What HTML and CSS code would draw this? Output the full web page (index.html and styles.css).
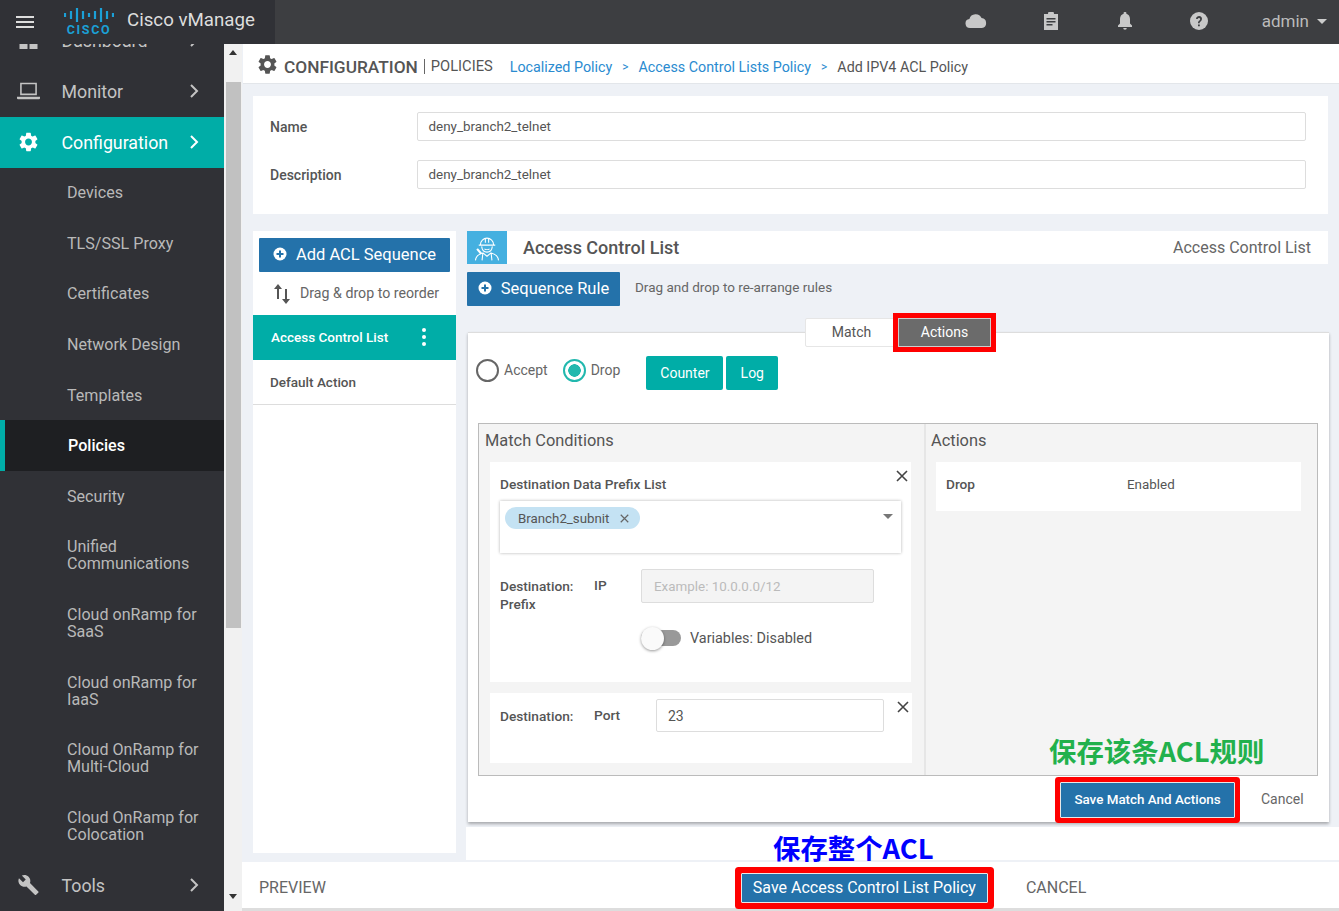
FILE: index.html
```html
<!DOCTYPE html>
<html lang="en">
<head>
  <meta charset="UTF-8">
  <title>Cisco vManage</title>
  <link rel="stylesheet" href="styles.css">
</head>

<body>

  <svg class="defs" width="0" height="0">
    <symbol id="i-gear" viewBox="0 0 24 24"><path d="M19.14 12.94c.04-.3.06-.61.06-.94 0-.32-.02-.64-.07-.94l2.03-1.58a.49.49 0 0 0 .12-.61l-1.92-3.32a.488.488 0 0 0-.59-.22l-2.39.96c-.5-.38-1.03-.7-1.62-.94l-.36-2.54a.484.484 0 0 0-.48-.41h-3.84c-.24 0-.43.17-.47.41l-.36 2.54c-.59.24-1.13.57-1.62.94l-2.39-.96c-.22-.08-.47 0-.59.22L2.74 8.87c-.12.21-.08.47.12.61l2.03 1.58c-.05.3-.09.63-.09.94s.02.64.07.94l-2.03 1.58a.49.49 0 0 0-.12.61l1.92 3.32c.12.22.37.29.59.22l2.39-.96c.5.38 1.03.7 1.62.94l.36 2.54c.05.24.24.41.48.41h3.84c.24 0 .44-.17.47-.41l.36-2.54c.59-.24 1.13-.56 1.62-.94l2.39.96c.22.08.47 0 .59-.22l1.92-3.32c.12-.22.07-.47-.12-.61l-2.01-1.58zM12 15.6c-1.98 0-3.6-1.62-3.6-3.6s1.62-3.6 3.6-3.6 3.6 1.62 3.6 3.6-1.62 3.6-3.6 3.6z"/></symbol>
    <symbol id="i-chev" viewBox="0 0 10 16"><path d="M2 2l6 6-6 6" fill="none" stroke="currentColor" stroke-width="2"/></symbol>
    <symbol id="i-plus" viewBox="0 0 14 14"><circle cx="7" cy="7" r="6.500"/><path d="M6 3.500h2V6h2.500v2H8v2.500H6V8H3.500V6H6z" fill="var(--hole)"/></symbol>
    <symbol id="i-x" viewBox="0 0 12 12"><path d="M1 1l10 10M11 1L1 11" fill="none" stroke="currentColor" stroke-width="1.600"/></symbol>
  </svg>

  <header class="topbar">
    <div class="brand">
      <svg class="burger" viewBox="0 0 18 14"><path d="M0 1h18v2H0zM0 6h18v2H0zM0 11h18v2H0z"/></svg>
      <div class="logo">
        <svg class="logo-bars" viewBox="0 0 50 14">
          <path d="M1 5v4M7 3v8M13 0v14M19 3v8M25 5v4M31 3v8M37 0v14M43 3v8M49 5v4" stroke="#1ba0d7" stroke-width="2.200"/>
        </svg>
        <span class="logo-word">CISCO</span>
      </div>
      <span class="brand-name">Cisco vManage</span>
    </div>
    <div class="top-icons">
      <svg class="ti ti-cloud" viewBox="0 0 22 14"><path d="M5 14a4.500 4.500 0 0 1-.6-8.960A6.500 6.500 0 0 1 16.600 4.100 5 5 0 0 1 17 14z"/></svg>
      <svg class="ti ti-clip" viewBox="0 0 16 18"><path fill-rule="evenodd" d="M1 2h4a3 3 0 0 1 6 0h4v16H1zM3.500 6v1.500h9V6zM3.500 9v1.500h9V9zM3.500 12v1.500h6V12z"/></svg>
      <svg class="ti ti-bell" viewBox="0 0 14 18"><path d="M7 0a1.300 1.300 0 0 1 1.300 1.700C10.600 2.300 12 4.300 12 7v4.500l2 2V15H0v-1.500l2-2V7c0-2.700 1.400-4.700 3.700-5.300A1.300 1.300 0 0 1 7 0zM5.200 16h3.600a1.800 1.800 0 0 1-3.600 0z"/></svg>
      <svg class="ti ti-help" viewBox="0 0 18 18"><circle cx="9" cy="9" r="9"/><path d="M6 7a3 3 0 1 1 4.600 2.500c-.9.600-.9.900-.9 1.800H8c0-1.500.3-2.100 1.400-2.900.6-.4.800-.8.800-1.300a1.300 1.300 0 0 0-2.500-.1zM8 12.500h1.800v1.800H8z" fill="#3d3e41"/></svg>
      <span class="user">admin</span>
      <span class="user-caret"></span>
    </div>
  </header>

  <div class="shell">
    <aside class="sidebar">
      <a class="nav-item nav-cut">
        <svg class="nav-ico" viewBox="0 0 20 20"><path d="M1 1h8v8H1zM11 1h8v8h-8zM1 11h8v8H1zM11 11h8v8h-8z"/></svg>
        <span class="nav-text">Dashboard</span>
        <svg class="nav-chev"><use href="#i-chev"/></svg>
      </a>
      <a class="nav-item">
        <svg class="nav-ico" viewBox="0 0 22 18"><path fill-rule="evenodd" d="M3 1h16v12H3zM4.500 2.500v9h13v-9zM0 14.500h22V16a1 1 0 0 1-1 1H1a1 1 0 0 1-1-1z"/></svg>
        <span class="nav-text">Monitor</span>
        <svg class="nav-chev"><use href="#i-chev"/></svg>
      </a>
      <a class="nav-item nav-open">
        <svg class="nav-ico nav-gear"><use href="#i-gear"/></svg>
        <span class="nav-text">Configuration</span>
        <svg class="nav-chev"><use href="#i-chev"/></svg>
      </a>
      <a class="sub-item">Devices</a>
      <a class="sub-item">TLS/SSL Proxy</a>
      <a class="sub-item">Certificates</a>
      <a class="sub-item">Network Design</a>
      <a class="sub-item">Templates</a>
      <a class="sub-item sub-active">Policies</a>
      <a class="sub-item">Security</a>
      <a class="sub-item sub-two">Unified<br>Communications</a>
      <a class="sub-item sub-two">Cloud onRamp for<br>SaaS</a>
      <a class="sub-item sub-two">Cloud onRamp for<br>IaaS</a>
      <a class="sub-item sub-two">Cloud OnRamp for<br>Multi-Cloud</a>
      <a class="sub-item sub-two">Cloud OnRamp for<br>Colocation</a>
      <a class="nav-item">
        <svg class="nav-ico nav-tool" viewBox="0 0 24 24"><path d="M22.700 19l-9.100-9.100c.9-2.300.4-5-1.500-6.900-2-2-5-2.400-7.400-1.300L9 6 6 9 1.600 4.700C.4 7.100.9 10.100 2.900 12.100c1.900 1.900 4.600 2.400 6.900 1.500l9.100 9.100c.4.400 1 .4 1.400 0l2.300-2.300c.5-.4.5-1.100.1-1.400z"/></svg>
        <span class="nav-text">Tools</span>
        <svg class="nav-chev"><use href="#i-chev"/></svg>
      </a>
    </aside>

    <div class="scrollbar">
      <span class="sb-up"></span>
      <span class="sb-thumb"></span>
      <span class="sb-down"></span>
    </div>

    <main class="main">
      <div class="crumbs">
        <svg class="crumb-gear"><use href="#i-gear"/></svg>
        <span class="crumb-title">CONFIGURATION</span>
        <span class="crumb-sub">POLICIES</span>
        <a class="crumb-link crumb-first">Localized Policy</a>
        <span class="crumb-sep">&gt;</span>
        <a class="crumb-link">Access Control Lists Policy</a>
        <span class="crumb-sep">&gt;</span>
        <span class="crumb-now">Add IPV4 ACL Policy</span>
      </div>

      <section class="name-card">
        <div class="name-row">
          <label class="strong">Name</label>
          <div class="field">deny_branch2_telnet</div>
        </div>
        <div class="name-row">
          <label class="strong">Description</label>
          <div class="field">deny_branch2_telnet</div>
        </div>
      </section>

      <div class="builder">
        <div class="seq-panel">
          <button class="btn-blue btn-add">
            <svg class="plus"><use href="#i-plus"/></svg>Add ACL Sequence
          </button>
          <div class="drag-hint">
            <svg class="sort" viewBox="0 0 18 22"><path d="M5 1l4 5H6v10H4V6H1zM13 21l-4-5h3V6h2v10h3z"/></svg>
            Drag &amp; drop to reorder
          </div>
          <div class="seq-item seq-active">
            <span>Access Control List</span>
            <span class="dots"><i></i><i></i><i></i></span>
          </div>
          <div class="seq-item">Default Action</div>
        </div>

        <div class="rule-col">
          <div class="rule-head">
            <span class="rule-icon">
              <svg viewBox="0 0 34 34" fill="none" stroke="#fff" stroke-width="1.300">
                <path d="M9 13a8 8 0 0 1 16 0M7 13.500h20M15 5.500v5M19 5.500v5"/>
                <path d="M10.500 15c.5 4.500 3 7 6.500 7s6-2.500 6.500-7M14 18c1.500 1.200 4.500 1.200 6 0"/>
                <path d="M3 32c.5-5 3-7.500 9-9l5 4 5-4c6 1.500 8.500 4 9 9M12 23l-1 9M22 23l1 9"/>
                <path d="M5 18l5 6" stroke-width="2.600"/>
              </svg>
            </span>
            <span class="rule-title">Access Control List</span>
            <span class="rule-kind">Access Control List</span>
          </div>

          <div class="seq-row">
            <button class="btn-blue btn-seq">
              <svg class="plus"><use href="#i-plus"/></svg>Sequence Rule
            </button>
            <span class="seq-hint">Drag and drop to re-arrange rules</span>
          </div>

          <div class="rule-card">
            <div class="tabs">
              <span class="tab">Match</span>
              <span class="tab tab-on">Actions</span>
            </div>

            <div class="action-row">
              <span class="radio"></span><span class="radio-label">Accept</span>
              <span class="radio radio-on"></span><span class="radio-label">Drop</span>
              <button class="btn-teal btn-counter">Counter</button>
              <button class="btn-teal btn-log">Log</button>
            </div>

            <div class="cond-box">
              <div class="cond-left">
                <h3>Match Conditions</h3>
                <div class="cond-card cond-prefix">
                  <svg class="close"><use href="#i-x"/></svg>
                  <div class="strong">Destination Data Prefix List</div>
                  <div class="multi">
                    <span class="chip">Branch2_subnit <svg class="chip-x"><use href="#i-x"/></svg></span>
                    <span class="multi-caret"></span>
                  </div>
                  <div class="ip-row">
                    <div class="strong ip-label">Destination: <br>Prefix</div>
                    <div class="strong ip-key">IP</div>
                    <div class="field field-off">Example: 10.0.0.0/12</div>
                  </div>
                  <div class="var-row">
                    <span class="switch"><i></i></span>
                    <span>Variables: Disabled</span>
                  </div>
                </div>
                <div class="cond-card cond-port">
                  <svg class="close"><use href="#i-x"/></svg>
                  <div class="strong ip-label">Destination:</div>
                  <div class="strong port-key">Port</div>
                  <div class="field port-field">23</div>
                </div>
              </div>
              <div class="cond-right">
                <h3>Actions</h3>
                <div class="act-card">
                  <span class="strong act-key">Drop</span>
                  <span>Enabled</span>
                </div>
              </div>
              <div class="note note-green">保存该条ACL规则</div>
            </div>

            <div class="card-foot">
              <button class="btn-blue btn-save marked">Save Match And Actions</button>
              <span class="link-cancel">Cancel</span>
            </div>
          </div>

          <div class="note-band">
            <span class="note note-blue">保存整个ACL</span>
          </div>
        </div>
      </div>

      <footer class="page-foot">
        <span class="preview">PREVIEW</span>
        <button class="btn-blue btn-policy marked">Save Access Control List Policy</button>
        <span class="foot-cancel">CANCEL</span>
      </footer>
    </main>
  </div>

</body>
</html>
```

FILE: styles.css
```css
* {
  box-sizing: border-box;
}

html,
body {
  height: 100%;
}

body {
  margin: 0;
  overflow: hidden;
  font-family: Roboto, "Liberation Sans", sans-serif;
  font-size: 14px;
  color: #555;
  background: #eef1f6;
}

.defs {
  position: absolute;
}

button {
  font-family: inherit;
  border: none;
  padding: 0;
  cursor: pointer;
}

/* top bar */
.topbar {
  display: flex;
  justify-content: space-between;
  height: 44px;
  background: #3d3e41;
}

.brand {
  display: flex;
  align-items: center;
  width: 275px;
  padding-left: 16px;
  background: #303136;
}

.burger {
  width: 18px;
  height: 14px;
  fill: #ddd;
}

.logo {
  display: flex;
  flex-direction: column;
  align-items: center;
  width: 50px;
  margin-left: 30px;
}

.logo-bars {
  width: 50px;
  height: 14px;
  margin-bottom: 2px;
}

.logo-word {
  font-size: 12.500px;
  font-weight: 700;
  line-height: 12px;
  letter-spacing: 1.6px;
  color: #1ba0d7;
}

.brand-name {
  margin-left: 13px;
  margin-bottom: 4px;
  font-size: 18.700px;
  color: #ddd;
}

.top-icons {
  display: flex;
  align-items: center;
  padding-bottom: 2px;
}

.ti {
  fill: #c8c8c8;
}

.ti-cloud {
  width: 22px;
  height: 14px;
}

.ti-clip {
  width: 16px;
  height: 18px;
  margin-left: 56px;
}

.ti-bell {
  width: 14px;
  height: 18px;
  margin-left: 59px;
}

.ti-help {
  width: 18px;
  height: 18px;
  margin-left: 58px;
}

.user {
  margin-left: 54px;
  font-size: 17px;
  color: #bbb;
}

.user-caret {
  width: 0;
  height: 0;
  margin: 0 12px 0 8px;
  border-left: 5px solid transparent;
  border-right: 5px solid transparent;
  border-top: 5px solid #ccc;
}

/* shell */
.shell {
  display: flex;
  height: 867px;
}

.sidebar {
  flex: none;
  width: 224px;
  overflow: hidden;
  background: #303136;
  color: #c9c9c9;
}

.nav-item {
  display: flex;
  align-items: center;
  height: 51px;
  padding-left: 17px;
  font-size: 17.800px;
  color: #c4c4c4;
}

.nav-cut {
  margin-top: -29.500px;
}

.nav-open {
  background: #00ada7;
  color: #fff;
}

.nav-ico {
  flex: none;
  width: 23px;
  height: 20px;
  fill: currentColor;
}

.nav-gear {
  height: 24px;
}

.nav-tool {
  height: 22px;
}

.nav-text {
  flex: 1;
  margin-left: 21.500px;
}

.nav-chev {
  flex: none;
  width: 10px;
  height: 16px;
  margin-right: 25px;
  color: currentColor;
}

.sub-item {
  display: flex;
  align-items: center;
  height: 50.600px;
  padding-left: 67px;
  font-size: 16.100px;
  line-height: 17px;
  color: #b9b9b9;
}

.sub-two {
  height: 67.600px;
}

.sub-active {
  background: #1e1f22;
  border-left: 5px solid #00ada7;
  padding-left: 63px;
  font-weight: 500;
  color: #fff;
}

/* page scrollbar */
.scrollbar {
  flex: none;
  display: flex;
  flex-direction: column;
  align-items: center;
  width: 18px;
  background: #f1f1f1;
}

.sb-up,
.sb-down {
  width: 0;
  height: 0;
  border-left: 4px solid transparent;
  border-right: 4px solid transparent;
}

.sb-up {
  margin-top: 6px;
  border-bottom: 5px solid #333;
}

.sb-thumb {
  width: 15px;
  height: 546px;
  margin-top: 27px;
  background: #c1c1c1;
}

.sb-down {
  margin-top: 266px;
  border-top: 5px solid #333;
}

/* main column */
.main {
  flex: 1;
  display: flex;
  flex-direction: column;
  min-width: 0;
}

.crumbs {
  display: flex;
  align-items: center;
  height: 40px;
  margin-left: 1px;
  padding: 5px 0 0 13px;
  background: #fff;
  border-top: 1px solid #fff;
  border-bottom: 1px solid #e3e6ea;
}

.crumb-gear {
  width: 23px;
  height: 23px;
  fill: #555;
  margin-bottom: 5px;
}

.crumb-title {
  margin-left: 5px;
  font-size: 17.300px;
  font-weight: 500;
  color: #555;
}

.crumb-sub {
  margin-left: 6px;
  padding-left: 6px;
  border-left: 1px solid #666;
  font-size: 14.700px;
  line-height: 15px;
  color: #555;
}

.crumb-link {
  font-size: 14.300px;
  color: #2a8bd0;
}

.crumb-first {
  margin-left: 17px;
}

.crumb-sep {
  margin: 0 10px;
  font-size: 12px;
  color: #2a8bd0;
}

.crumb-now {
  font-size: 14.300px;
  color: #555;
}

.strong {
  font-size: 13.700px;
  font-weight: 500;
  color: #555;
}

.name-card {
  display: flex;
  flex-direction: column;
  height: 118px;
  margin: 12px 11px 0;
  padding: 16px 22px 0 17px;
  gap: 19px;
  background: #fff;
}

.name-row {
  display: flex;
  align-items: center;
  height: 29px;
}

.name-row label {
  flex: none;
  width: 147px;
  font-size: 14px;
}

.field {
  display: flex;
  align-items: center;
  flex: 1;
  height: 100%;
  padding-left: 10.500px;
  font-size: 13.400px;
  color: #555;
  background: #fff;
  border: 1px solid #ddd;
  border-radius: 2px;
}

.builder {
  flex: 1;
  display: flex;
  margin-top: 17px;
  min-height: 0;
}

.seq-panel {
  flex: none;
  width: 203px;
  height: 622px;
  margin-left: 11px;
  padding-top: 7px;
  background: #fff;
}

.btn-blue {
  display: flex;
  align-items: center;
  justify-content: center;
  color: #fff;
  background: #2472aa;
  border-radius: 1px;
}

.plus {
  --hole: #2472aa;
  flex: none;
  width: 14px;
  height: 14px;
  margin-right: 9px;
  fill: #fff;
}

.btn-add {
  width: 191px;
  height: 34px;
  margin-left: 6px;
  padding-bottom: 2px;
  font-size: 16.500px;
}

.drag-hint {
  display: flex;
  align-items: center;
  height: 43px;
  padding: 0 0 2px 20px;
  font-size: 14.200px;
  color: #666;
}

.sort {
  width: 18px;
  height: 22px;
  margin: 3px 9px 0 0;
  fill: #555;
}

.seq-item {
  display: flex;
  align-items: center;
  justify-content: space-between;
  height: 44.500px;
  padding: 0 27px 0 17px;
  font-size: 13.500px;
  font-weight: 500;
  color: #555;
  border-bottom: 1px solid #ddd;
}

.seq-active {
  height: 45px;
  padding: 0 30px 2px 18px;
  color: #fff;
  background: #00ada7;
  border-bottom: none;
}

.dots {
  display: flex;
  flex-direction: column;
  gap: 3px;
}

.dots i {
  width: 4px;
  height: 4px;
  border-radius: 50%;
  background: #fff;
}

.rule-col {
  flex: 1;
  min-width: 0;
  margin-left: 11px;
}

.rule-head {
  display: flex;
  align-items: center;
  height: 33px;
  margin-right: 11px;
  padding-right: 17px;
  background: #fff;
}

.rule-icon {
  display: flex;
  align-items: center;
  justify-content: center;
  width: 40px;
  height: 33px;
  background: #45b0e0;
}

.rule-icon svg {
  width: 28px;
  height: 28px;
}

.rule-title {
  flex: 1;
  margin-left: 16px;
  font-size: 18px;
  font-weight: 500;
  color: #555;
}

.rule-kind {
  font-size: 16px;
  color: #666;
}

.seq-row {
  display: flex;
  align-items: center;
  margin-top: 8px;
}

.btn-seq {
  width: 153px;
  height: 34px;
  padding-bottom: 2px;
  font-size: 16.500px;
}

.seq-hint {
  margin: 0 0 4px 15px;
  font-size: 13.500px;
  color: #666;
}

.rule-card {
  position: relative;
  width: 861px;
  height: 490px;
  margin: 26px 0 0 1px;
  background: #fff;
  border-top: 1px solid #ddd;
  box-shadow: 0 2px 3px rgba(0, 0, 0, .3);
}

.tabs {
  display: flex;
  height: 29px;
  margin: -15px 0 0 337px;
}

.tab {
  display: flex;
  align-items: center;
  justify-content: center;
  width: 93px;
  padding-bottom: 2px;
  font-size: 14px;
  background: #fff;
  color: #555;
  border: 1px solid #e6e6e6;
  border-radius: 2px;
}

.tab-on {
  color: #fff;
  background: #6b6b6b;
  border-color: #ccc;
  border-radius: 0;
  box-shadow: 0 0 0 5px #f00;
}

.action-row {
  display: flex;
  align-items: center;
  height: 34px;
  margin-top: 9px;
  padding-left: 8px;
}

.radio {
  flex: none;
  width: 23px;
  height: 23px;
  margin-bottom: 6px;
  border-radius: 50%;
  border: 2px solid #666;
  background: #fff;
}

.radio-on {
  border-color: #21b8ae;
  background: radial-gradient(circle, #21b8ae 0 6px, #fff 6.500px);
}

.radio-label {
  margin: 0 15px 6px 5px;
  font-size: 14px;
  color: #666;
}

.btn-teal {
  height: 34px;
  padding: 0 14px;
  font-size: 14px;
  color: #fff;
  background: #00ada7;
  border-radius: 2px;
}

.btn-counter {
  width: 77px;
  margin: 0 3px 0 11px;
}

.btn-log {
  width: 52px;
}

.cond-box {
  position: relative;
  display: flex;
  width: 840px;
  height: 353px;
  margin: 33px 0 0 10px;
  background: #f4f4f4;
  border: 1px solid #bbb;
}

.cond-box h3 {
  margin: 0;
  padding-top: 2px;
  font-size: 16.400px;
  font-weight: 400;
  line-height: 20px;
  color: #555;
}

.cond-left {
  flex: none;
  width: 447px;
  padding: 5px 0 0 6px;
  border-right: 2px solid #e6e6e6;
}

.cond-card {
  position: relative;
  width: 421px;
  margin: 11px 0 0 5px;
  padding: 0 10px;
  background: #fff;
}

.close {
  position: absolute;
  top: 8px;
  right: 3px;
  width: 12px;
  height: 12px;
  color: #444;
}

.cond-prefix {
  height: 220px;
  padding-top: 14px;
}

.multi {
  position: relative;
  display: flex;
  align-items: flex-start;
  height: 52px;
  width: 401px;
  margin-top: 9px;
  padding: 6px 5px;
  background: #fff;
  box-shadow: 0 0 3px rgba(0, 0, 0, .3);
}

.chip {
  display: inline-flex;
  align-items: center;
  height: 22px;
  padding: 0 11px 0 13px;
  font-size: 13.300px;
  color: #555;
  background: #c4e2f3;
  border-radius: 11px;
}

.chip-x {
  width: 9px;
  height: 9px;
  margin-left: 11px;
  color: #666;
}

.multi-caret {
  position: absolute;
  top: 13px;
  right: 8px;
  width: 0;
  height: 0;
  border-left: 5px solid transparent;
  border-right: 5px solid transparent;
  border-top: 5px solid #777;
}

.ip-row {
  display: flex;
  height: 34px;
  margin-top: 16px;
}

.ip-label {
  flex: none;
  width: 94px;
  line-height: 18px;
  padding-top: 8px;
}

.ip-key {
  flex: none;
  width: 47px;
  padding-top: 8px;
}

.field-off {
  flex: none;
  width: 233px;
  padding-left: 12px;
  color: #bbb;
  background: #f4f4f4;
}

.var-row {
  display: flex;
  align-items: center;
  height: 24px;
  margin: 23px 0 0 141px;
  font-size: 14.400px;
  color: #555;
}

.switch {
  position: relative;
  width: 40px;
  height: 16px;
  margin-right: 9px;
  background: #999;
  border-radius: 8px;
}

.switch i {
  position: absolute;
  top: -3px;
  left: 0;
  width: 23px;
  height: 23px;
  background: #fafafa;
  border-radius: 50%;
  box-shadow: 0 1px 3px rgba(0, 0, 0, .4);
}

.cond-port {
  display: flex;
  width: 422px;
  height: 70px;
  margin-top: 11px;
  padding-top: 6px;
}

.port-key {
  flex: none;
  width: 62px;
  padding-top: 8px;
}

.port-field {
  flex: none;
  width: 228px;
  height: 33px;
  font-size: 14px;
  padding-left: 11px;
}

.cond-right {
  flex: 1;
  padding: 5px 0 0 5px;
}

.act-card {
  display: flex;
  align-items: center;
  width: 365px;
  height: 49px;
  margin: 11px 0 0 5px;
  padding: 0 0 5px 10px;
  font-size: 13.400px;
  background: #fff;
}

.act-key {
  width: 181px;
}

.note {
  font-family: "Noto Sans CJK SC", sans-serif;
  font-size: 27.400px;
  font-weight: 700;
  line-height: 34px;
  white-space: nowrap;
}

.note-green {
  position: absolute;
  top: 309px;
  left: 570px;
  color: #22b14c;
}

.card-foot {
  display: flex;
  align-items: center;
  height: 36px;
  margin-top: 6px;
  padding-left: 592px;
}

.marked {
  border: 1px solid #e8e8e8;
}

.btn-save {
  width: 175px;
  height: 36px;
  padding-bottom: 2px;
  font-size: 13.400px;
  font-weight: 500;
  box-shadow: 0 0 0 5px #f00;
}

.link-cancel {
  margin-left: 26px;
  padding-bottom: 2px;
  font-size: 14px;
  color: #666;
}

.note-band {
  display: flex;
  align-items: center;
  height: 33px;
  margin: 5px 0 0 -1px;
  padding-left: 307px;
  background: #fff;
}

.note-blue {
  margin-top: 6px;
  color: #00f;
}

.page-foot {
  flex: none;
  display: flex;
  align-items: center;
  height: 49px;
  padding: 9px 0 4px 17px;
  background: #fff;
  border-bottom: 3px solid #ddd;
  font-size: 16px;
  color: #666;
}

.btn-policy {
  width: 247px;
  height: 30px;
  margin: 1px 0 0 415px;
  padding-bottom: 1px;
  font-size: 16px;
  box-shadow: 0 0 0 6px #f00;
}

.foot-cancel {
  margin-left: 38px;
}
```
